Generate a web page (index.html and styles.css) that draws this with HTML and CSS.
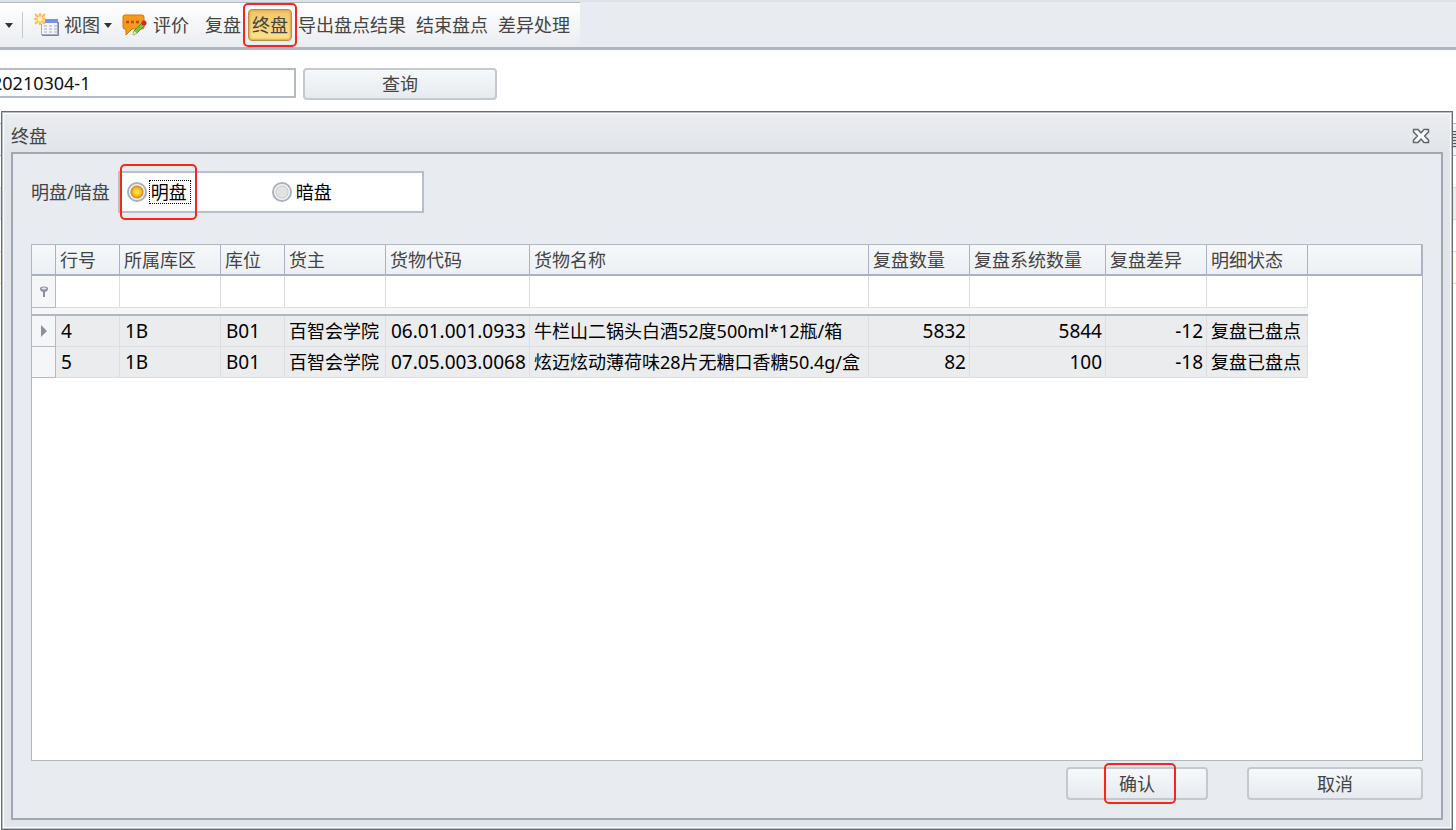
FILE: index.html
```
<!DOCTYPE html>
<html lang="zh-CN">
<head>
    <meta charset="UTF-8">
    <title>终盘</title>
    <link rel="stylesheet" href="styles.css">
</head>
<body>
<div id="toolbar">
    <div class="tools">
        <button type="button" class="more" aria-label="更多"><i class="arrow"></i></button>
        <span class="split"></span>
        <button type="button" class="tool view">
            <svg width="26" height="24" viewBox="0 0 26 24">
                <rect x="7.5" y="6.5" width="16" height="15" fill="#f4f6fa" stroke="#a3abbd"/>
                <rect x="8" y="6" width="16" height="4" fill="#6f93ee"/>
                <path d="M8 22.500h16.500V9" fill="none" stroke="#7d8699"/>
                <path d="M10 13h3M10 16h3M10 19h3M15 13h3M15 16h3M15 19h3M20 13h3M20 16h3M20 19h3" stroke="#a4aab8"/>
                <rect x="1" y="1" width="10" height="10" fill="#fde3a0"/>
                <path d="M6 0v12M0 6h12M1 1l10 10M11 1L1 11" stroke="#f9b54e" stroke-width="1.500"/>
                <circle cx="6" cy="6" r="2.500" fill="#fff3b8"/>
            </svg>
            <span>视图</span>
            <i class="arrow"></i>
        </button>
        <button type="button" class="tool rate">
            <svg width="25" height="22" viewBox="0 0 25 22">
                <path d="M3 1h17q2 0 2 2v10q0 2-2 2H10l-6 6v-6H3q-2 0-2-2V3q0-2 2-2z" fill="#f59a1b" stroke="#d9720c"/>
                <path d="M4 8h3M9 8h3M14 8h3" stroke="#c4450b" stroke-width="2.500"/>
                <path d="M11 21l1-4 8-8 3 2-8 8z" fill="#7cc142" stroke="#4f9a2a"/>
                <path d="M11 21l1-4 3 2z" fill="#f6e3b8"/>
                <circle cx="22" cy="9" r="2.500" fill="#d9232b"/>
            </svg>
            <span>评价</span>
        </button>
        <button type="button" class="tool">复盘</button>
        <span class="mark mark-tool"><button type="button" class="tool active">终盘</button></span>
        <button type="button" class="tool">导出盘点结果</button>
        <button type="button" class="tool">结束盘点</button>
        <button type="button" class="tool">差异处理</button>
    </div>
</div>

<form id="search">
    <input type="text" value="20210304-1" aria-label="盘点单号">
    <button type="button" class="btn">查询</button>
</form>

<div id="main">
    <!-- 弹窗后面的列表 -->
    <div id="list">
        <div class="list-head"></div>
        <div></div>
        <div class="odd"></div>
        <div></div>
        <div class="cur"></div>
    </div>

    <div id="dialog" role="dialog" aria-labelledby="dialog-title">
        <div class="title">
            <span id="dialog-title">终盘</span>
            <button type="button" class="close" aria-label="关闭">
                <svg width="18" height="16" viewBox="0 0 18 16">
                    <path d="M1.500 1.500h4.500L9 5l3-3.500h4.500v2.500L12.500 8l4 4v2.500H12L9 11l-3 3.500H1.500V12l4-4-4-4z" fill="#fff" stroke="#5d646b" stroke-width="1.500" stroke-linejoin="round"/>
                </svg>
            </button>
        </div>
        <div class="panel">
            <div class="mode">
                <span id="mode-label">明盘/暗盘</span>
                <div class="radios" role="radiogroup" aria-labelledby="mode-label">
                    <label class="mark mark-radio"><input type="radio" name="mode" checked><span class="focus">明盘</span></label>
                    <label><input type="radio" name="mode"><span>暗盘</span></label>
                </div>
            </div>

            <div class="grid">
                <table>
                    <colgroup>
                        <col class="w-tag">
                        <col class="w-no">
                        <col class="w-area">
                        <col class="w-no">
                        <col class="w-area">
                        <col class="w-code">
                        <col class="w-name">
                        <col class="w-area">
                        <col class="w-sys">
                        <col class="w-area">
                        <col class="w-area">
                        <col>
                    </colgroup>
                    <thead>
                    <tr>
                        <th></th>
                        <th>行号</th>
                        <th>所属库区</th>
                        <th>库位</th>
                        <th>货主</th>
                        <th>货物代码</th>
                        <th>货物名称</th>
                        <th>复盘数量</th>
                        <th>复盘系统数量</th>
                        <th>复盘差异</th>
                        <th>明细状态</th>
                        <th></th>
                    </tr>
                    </thead>
                    <tbody>
                    <tr class="filter">
                        <td class="tag">
                            <svg width="10" height="12" viewBox="0 0 10 12">
                                <path d="M1 2.500q0-2 4-2t4 2q0 2.500-3 3.500v5H4V6Q1 5 1 2.500z" fill="#8b929c"/>
                                <ellipse cx="5" cy="2.500" rx="2.500" ry="1" fill="#e3e7eb"/>
                            </svg>
                        </td>
                        <td></td>
                        <td></td>
                        <td></td>
                        <td></td>
                        <td></td>
                        <td></td>
                        <td></td>
                        <td></td>
                        <td></td>
                        <td></td>
                        <td class="blank"></td>
                    </tr>
                    <tr class="gap">
                        <td colspan="11"></td>
                        <td class="blank"></td>
                    </tr>
                    <tr>
                        <td class="tag">
                            <svg width="6" height="12" viewBox="0 0 6 12"><path d="M0 0l6 6-6 6z" fill="#8b929c"/></svg>
                        </td>
                        <td class="num">4</td>
                        <td class="num">1B</td>
                        <td class="num">B01</td>
                        <td>百智会学院</td>
                        <td class="num">06.01.001.0933</td>
                        <td>牛栏山二锅头白酒52度500ml*12瓶/箱</td>
                        <td class="num right">5832</td>
                        <td class="num right">5844</td>
                        <td class="num right">-12</td>
                        <td>复盘已盘点</td>
                        <td class="blank"></td>
                    </tr>
                    <tr>
                        <td class="tag"></td>
                        <td class="num">5</td>
                        <td class="num">1B</td>
                        <td class="num">B01</td>
                        <td>百智会学院</td>
                        <td class="num">07.05.003.0068</td>
                        <td>炫迈炫动薄荷味28片无糖口香糖50.4g/盒</td>
                        <td class="num right">82</td>
                        <td class="num right">100</td>
                        <td class="num right">-18</td>
                        <td>复盘已盘点</td>
                        <td class="blank"></td>
                    </tr>
                    </tbody>
                </table>
            </div>

            <div class="foot">
                <span class="mark mark-ok"><button type="button" class="btn ok">确认</button></span>
                <button type="button" class="btn cancel">取消</button>
            </div>
        </div>
    </div>
</div>
</body>
</html>
```
FILE: styles.css
```
* {
    margin: 0;
    padding: 0;
    box-sizing: border-box;
}

body {
    display: flex;
    flex-direction: column;
    min-height: 100vh;
    overflow-x: hidden;
    background-color: #fff;
    color: #444;
    font: 18px/24px "Noto Sans", "Noto Sans CJK SC", sans-serif;
}

button, input {
    font: inherit;
    color: inherit;
}

button {
    border: 0;
    background: none;
    white-space: nowrap;
    cursor: pointer;
}

svg {
    display: block;
}

/* 工具栏 */
#toolbar {
    height: 50px;
    border-top: 2px solid #dce2e8;
    border-bottom: 3px solid #b0b6be;
    background-color: #e8ebf0;
}

.tools {
    display: flex;
    align-items: center;
    width: 580px;
    height: 45px;
    padding-left: 4px;
    border-top: 1px solid #b0b8c0;
    background: linear-gradient(#fff, #e9ecf0);
}

.tool {
    display: flex;
    align-items: center;
    height: 32px;
    padding: 0 5px;
}

.more {
    padding: 0 0 0 1px;
}

.arrow {
    display: block;
    border: 4px solid transparent;
    border-top: 5px solid #333;
    border-bottom: 0;
}

.split {
    width: 1px;
    height: 26px;
    margin: 0 6px 0 9px;
    background-color: #c3c8cf;
}

.view {
    gap: 4px;
}

.rate {
    gap: 6px;
    margin-right: 6px;
}

.active {
    padding: 0 3px;
    border: 1px solid #b98e3f;
    border-radius: 4px;
    background: linear-gradient(#f3c566, #fde38c);
    box-shadow: inset 0 0 2px 1px #d9a550;
}

/* 红色标注框 */
.mark {
    position: relative;
}

.mark::after {
    content: "";
    position: absolute;
    border: 2px solid #f7261b;
    border-radius: 5px;
    pointer-events: none;
}

.mark-tool {
    margin: 0 1px 0 2px;
}

.mark-tool::after {
    inset: -6px -5px;
}

.mark-radio::after {
    inset: -16px -6px -16px -7px;
}

.mark-ok::after {
    inset: -4px 32px -4px 38px;
}

/* 查询 */
#search {
    display: flex;
    gap: 7px;
    padding: 18px 0 11px;
}

#search input {
    width: 308px;
    height: 30px;
    margin-left: -12px;
    padding-left: 2px;
    border: 2px solid #b4bac4;
    background-color: #fff;
    color: #111;
}

.btn {
    height: 33px;
    border: 2px solid #c5c9cf;
    border-radius: 4px;
    background: linear-gradient(#f6f9fc, #e7eaee);
}

#search .btn {
    width: 194px;
    height: 32px;
}

#main {
    display: flex;
    flex: 1;
    flex-direction: column;
    position: relative;
    padding: 0 3px 0 1px;
}

#list {
    position: absolute;
    top: 12px;
    right: 0;
    left: 0;
    border-top: 1px solid #b4bac4;
}

#list div {
    height: 32px;
    border-bottom: 1px solid #d8dce1;
}

#list .list-head {
    border-color: #b4bac4;
    background: repeating-linear-gradient(#555 0 1px, #ddd 1px 3px) right 7px / 3px 17px no-repeat #f2f5f8;
}

#list .odd {
    background-color: #ebedef;
}

#list .cur {
    background-color: #fffde8;
}

/* 弹窗 */
#dialog {
    display: flex;
    flex: 1;
    flex-direction: column;
    position: relative;
    padding: 0 9px 9px;
    border: 1px solid #656c74;
    box-shadow: inset 0 0 0 1px #b9bec4, inset 0 0 0 2px #fff;
    background: linear-gradient(#ebedf1, #e1e4e8 40px);
}

.title {
    display: flex;
    align-items: center;
    justify-content: space-between;
    height: 40px;
    padding: 8px 13px 0 0;
}

.panel {
    display: flex;
    flex: 1;
    flex-direction: column;
    padding: 17px 18px 18px;
    border: 2px solid #a1a7af;
    background-color: #e8ebf0;
}

.mode {
    display: flex;
    align-items: center;
    gap: 8px;
}

.radios {
    display: flex;
    align-items: center;
    width: 306px;
    height: 42px;
    padding-left: 7px;
    border: 2px solid #b9bfc8;
    background-color: #fff;
    color: #000;
}

.radios label {
    display: flex;
    align-items: center;
    gap: 2px;
}

.mark-radio {
    margin-right: 81px;
}

.radios input {
    appearance: none;
    width: 20px;
    height: 20px;
    border: 2px solid #a9b1bd;
    border-radius: 50%;
    background: radial-gradient(#e2e2e2 5px, #c9c9c9 6px, #f4f6f8 7px);
}

.radios input:checked {
    background: radial-gradient(#ffdf3a 2px, #f0a414 5px, #c98a2a 6px, #f4f6f8 7px);
}

.radios label span {
    padding: 0 3px 0 1px;
    border: 1px dotted transparent;
    line-height: 22px;
}

.radios .focus {
    border-color: #000;
}

/* 表格 */
.grid {
    flex: 1;
    margin-top: 31px;
    border: 1px solid #b0b7c1;
    background-color: #fff;
}

table {
    width: 100%;
    table-layout: fixed;
    border-collapse: separate;
    border-spacing: 0;
}

.w-tag {
    width: 24px;
}

.w-no {
    width: 64px;
}

.w-area {
    width: 101px;
}

.w-code {
    width: 144px;
}

.w-name {
    width: 339px;
}

.w-sys {
    width: 136px;
}

th {
    height: 31px;
    padding-left: 4px;
    border-right: 1px solid #a9b2be;
    border-bottom: 2px solid #a9b2be;
    background: linear-gradient(#f6f8fa, #ecf0f4);
    font-weight: normal;
    line-height: 28px;
    text-align: left;
}

td {
    height: 31px;
    padding: 0 3px 0 4px;
    border-right: 1px solid #dcdee1;
    border-bottom: 1px solid #dcdee1;
    background-color: #ebeced;
    color: #000;
    line-height: 30px;
    white-space: nowrap;
}

.num {
    padding-left: 5px;
    font-size: 19px;
}

.right {
    text-align: right;
}

.filter td {
    height: 32px;
    background-color: #fff;
}

.gap td {
    height: 8px;
    border-right: 0;
    border-bottom: 2px solid #b0b7c1;
    background-color: #f4f6f8;
}

td.tag, .filter td.tag {
    padding: 0;
    border-color: #b4bac4;
    background-color: #f4f6f8;
}

.tag svg {
    margin: 0 auto;
}

td.blank, .filter td.blank, .gap td.blank {
    border: 0;
    background-color: #fff;
}

.foot {
    display: flex;
    justify-content: flex-end;
    gap: 39px;
    margin-top: 6px;
}

.ok {
    width: 142px;
}

.cancel {
    width: 176px;
}
```
